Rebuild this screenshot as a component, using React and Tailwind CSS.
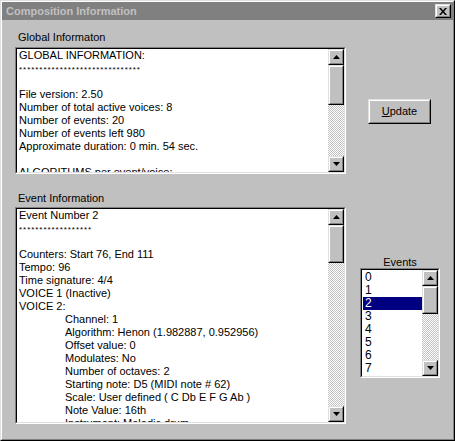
import React from "react";

const font = { fontFamily: "'Liberation Sans', Arial, sans-serif" };

const globalLines = [
  "GLOBAL INFORMATION:",
  "STARS30",
  "",
  "File version: 2.50",
  "Number of total active voices: 8",
  "Number of events: 20",
  "Number of events left 980",
  "Approximate duration: 0 min. 54 sec.",
  "",
  "ALGORITHMS per event/voice:",
];

const eventLines = [
  ["Event Number 2", 0],
  ["STARS18", 0],
  ["", 0],
  ["Counters: Start 76, End 111", 0],
  ["Tempo: 96", 0],
  ["Time signature: 4/4", 0],
  ["VOICE 1 (Inactive)", 0],
  ["VOICE 2:", 0],
  ["Channel: 1", 1],
  ["Algorithm: Henon (1.982887, 0.952956)", 1],
  ["Offset value: 0", 1],
  ["Modulates: No", 1],
  ["Number of octaves: 2", 1],
  ["Starting note: D5 (MIDI note # 62)", 1],
  ["Scale: User defined ( C Db E F G Ab )", 1],
  ["Note Value: 16th", 1],
  ["Instrument: Melodic drum", 1],
];

// raised 3D frame used by buttons
const Raised = ({ className = "", children }) => (
  <div className={`border border-t-[#dfdfdf] border-l-[#dfdfdf] border-b-black border-r-black ${className}`}>
    <div className="w-full h-full border border-t-white border-l-white border-b-[#808080] border-r-[#808080] bg-[#c0c0c0] flex items-center justify-center">
      {children}
    </div>
  </div>
);

const Arrow = ({ down }) => (
  <svg width="7" height="4" viewBox="0 0 7 4">
    <polygon points={down ? "0,0 7,0 3.5,4" : "0,4 7,4 3.5,0"} fill="#000" />
  </svg>
);

const Scrollbar = ({ thumbTop, thumbHeight }) => (
  <div className="w-[16px] h-full flex flex-col shrink-0">
    <Raised className="w-[16px] h-[16px] shrink-0">
      <Arrow />
    </Raised>
    <div className="flex-1 flex flex-col bg-[repeating-conic-gradient(#c0c0c0_0%_25%,#ffffff_0%_50%)] bg-[length:2px_2px]">
      <div style={{ height: thumbTop }} />
      <Raised className="w-[16px] shrink-0 h-auto">
        <div style={{ height: thumbHeight - 4 }} />
      </Raised>
    </div>
    <Raised className="w-[16px] h-[16px] shrink-0">
      <Arrow down />
    </Raised>
  </div>
);

const Sunken = ({ className = "", children }) => (
  <div className={`border border-t-[#808080] border-l-[#808080] border-b-white border-r-white ${className}`}>
    <div className="w-full h-full border border-t-black border-l-black border-b-[#dfdfdf] border-r-[#dfdfdf] bg-white flex overflow-hidden">
      {children}
    </div>
  </div>
);

const Stars = ({ n }) => (
  <div className="h-[13px] text-[8px] leading-[13px] tracking-[0.95px] pt-[1px] whitespace-nowrap">{"*".repeat(n)}</div>
);

const renderLine = (t, i, indent) => {
  if (t.startsWith("STARS")) return <Stars key={i} n={parseInt(t.slice(5))} />;
  return (
    <div key={i} className={`h-[13px] leading-[13px] whitespace-nowrap ${indent ? "pl-[46px]" : ""}`}>
      {t || "\u00a0"}
    </div>
  );
};

export default function App() {
  return (
    <div
      style={font}
      className="w-[455px] h-[441px] border border-t-[#dfdfdf] border-l-[#dfdfdf] border-b-black border-r-black text-[11px] text-black"
    >
      <div className="w-full h-full border border-t-white border-l-white border-b-[#808080] border-r-[#808080] bg-[#c0c0c0] flex flex-col">
        {/* Title bar */}
        <div className="h-[18px] bg-[#808080] flex items-center justify-between pl-[4px] pr-[2px] shrink-0">
          <span className="text-[#c0c0c0] font-bold text-[11px] leading-none">Composition Information</span>
          <Raised className="w-[16px] h-[14px]">
            <svg width="8" height="7" viewBox="0 0 8 7">
              <path d="M0 0 L2 0 L4 2.5 L6 0 L8 0 L5 3.5 L8 7 L6 7 L4 4.5 L2 7 L0 7 L3 3.5 Z" fill="#000" />
            </svg>
          </Raised>
        </div>

        {/* Body */}
        <div className="flex flex-1">
          <div className="ml-[13px] w-[331px] flex flex-col">
            <div className="mt-[11px] pl-[3px] h-[13px] leading-[13px]">Global Informaton</div>
            <Sunken className="mt-[3px] h-[127px]">
              <div className="flex-1 pl-[2px] overflow-hidden">
                {globalLines.map((t, i) => renderLine(t, i, false))}
              </div>
              <Scrollbar thumbTop={0} thumbHeight={40} />
            </Sunken>

            <div className="mt-[18px] pl-[3px] h-[13px] leading-[13px]">Event Information</div>
            <Sunken className="mt-[2px] h-[217px]">
              <div className="flex-1 pl-[2px] overflow-hidden">
                {eventLines.map(([t, ind], i) => renderLine(t, i, ind))}
              </div>
              <Scrollbar thumbTop={0} thumbHeight={38} />
            </Sunken>
          </div>

          <div className="flex flex-col">
            <Raised className="ml-[22px] mt-[79px] w-[63px] h-[25px]">
              <span>
                <span className="underline">U</span>pdate
              </span>
            </Raised>

            <div className="ml-[14px] mt-[132px] w-[80px] text-center h-[12px] leading-[12px]">Events</div>
            <Sunken className="ml-[14px] w-[80px] h-[110px]">
              <div className="flex-1 pt-[1px] pl-[1px] overflow-hidden">
                {["0", "1", "2", "3", "4", "5", "6", "7", "8"].map((n) => (
                  <div
                    key={n}
                    className={`h-[13px] leading-[13px] pl-[2px] text-[12px] ${n === "2" ? "bg-[#000080] text-white" : ""}`}
                  >
                    {n}
                  </div>
                ))}
              </div>
              <Scrollbar thumbTop={0} thumbHeight={28} />
            </Sunken>
          </div>
        </div>
      </div>
    </div>
  );
}
